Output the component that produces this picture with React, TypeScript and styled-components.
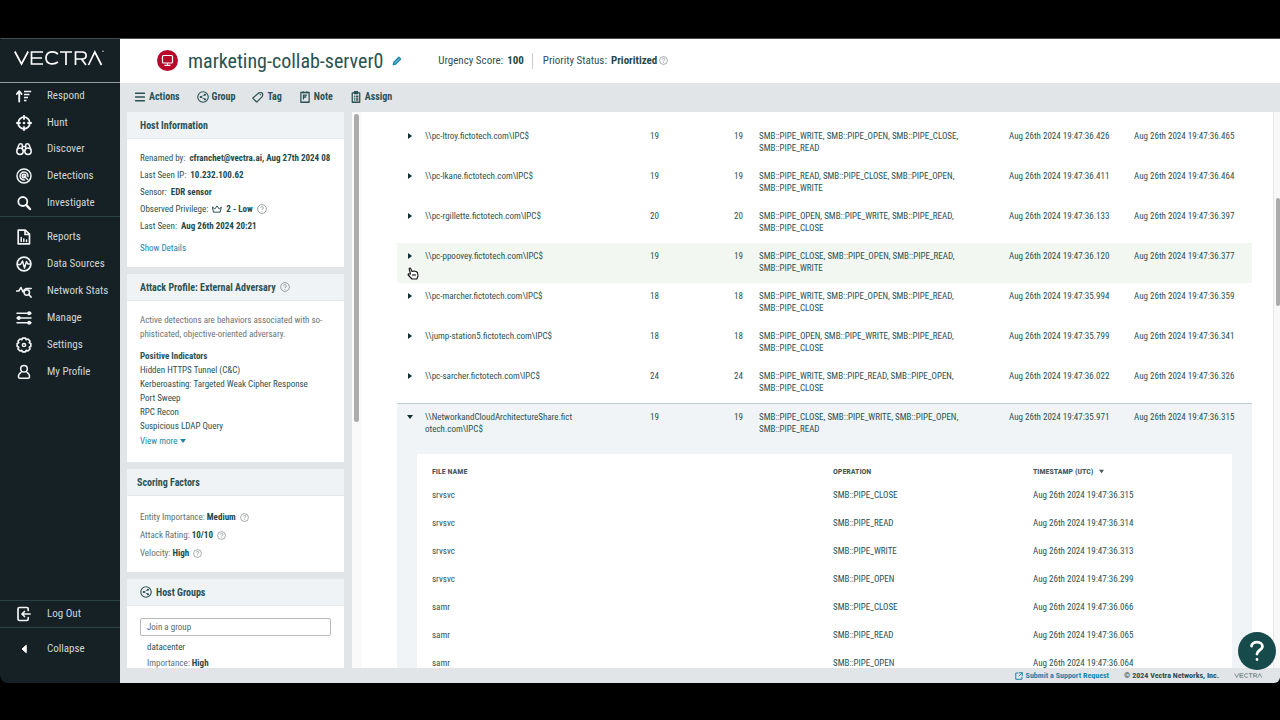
import React from "react";
import styled, { createGlobalStyle, css } from "styled-components";

const Global = createGlobalStyle`
  * { box-sizing: border-box; }
  html, body { margin: 0; background: #000; }
  body, button, input { font-family: "Roboto Condensed", Roboto, sans-serif; }
  svg { display: block; flex: none; }
`;

const INK = "#2b5253";
const STRONG = "#1f4a4a";
const LINK = "#1b86a8";

const Frame = styled.div`
  height: 100vh;
  padding: 38px 0 37px;
  display: flex;
`;
const Sidebar = styled.aside`
  flex: none;
  width: 120px;
  background: #162126;
  color: #cfd6d8;
  border-radius: 4px 0 0 8px;
  display: flex;
  flex-direction: column;
`;
const Brand = styled.div`
  height: 45px;
  padding: 11px 14px;
  border-top: 1px solid #414a4e;
  border-bottom: 1px solid #93a0a3;
`;
const Nav = styled.nav<{ $height: number }>`
  height: ${(p) => p.$height}px;
  display: grid;
  grid-auto-rows: 1fr;
  & + & {
    border-top: 1px solid #2d4246;
    padding-top: 7px;
  }
`;
const NavLink = styled.a`
  min-height: 26px;
  padding-left: 16px;
  display: flex;
  align-items: center;
  gap: 15px;
  color: inherit;
  text-decoration: none;
  font-size: 11px;
  line-height: 16px;
  svg { color: #f2f5f5; }
`;
const SideFoot = styled.div`
  margin-top: auto;
  border-top: 1px solid #2d4246;
`;
const Collapse = styled.button`
  width: 100%;
  height: 56px;
  padding: 0 0 14px 16px;
  border: 0;
  border-top: 1px solid #2d4246;
  background: none;
  color: inherit;
  display: flex;
  align-items: center;
  gap: 15px;
  font-size: 11px;
  line-height: 16px;
  text-align: left;
  svg { color: #fff; }
`;

const Main = styled.div`
  flex: 1;
  min-width: 0;
  background: #e1e5e8;
  border-top: 1px solid #4a4f50;
  display: flex;
  flex-direction: column;
  border-radius: 0 0 6px 0;
  overflow: hidden;
`;
const Header = styled.header`
  flex: none;
  height: 44px;
  padding: 0 0 1px 37px;
  background: #fff;
  display: flex;
  align-items: center;
  color: ${INK};
  font-size: 11px;
`;
const Title = styled.h1`
  margin: 0 9px 0 10px;
  font-size: 20px;
  line-height: 24px;
  font-weight: 400;
`;
const IconButton = styled.button`
  padding: 0;
  border: 0;
  background: none;
  color: ${LINK};
  display: flex;
`;
const Stat = styled.div`
  display: flex;
  align-items: center;
  gap: 4px;
  strong { color: ${STRONG}; }
  svg { margin-left: -2px; }
`;
const StatBar = styled.div`
  margin-left: 36px;
  display: flex;
  align-items: center;
  line-height: 16px;
  ${Stat} + ${Stat} {
    margin-left: 8px;
    padding-left: 10px;
    border-left: 1px solid #c9cfd1;
  }
`;
const Toolbar = styled.div`
  flex: none;
  height: 29px;
  padding: 0 0 1px 14px;
  display: flex;
  align-items: center;
  gap: 17px;
`;
const Tool = styled.button`
  padding: 0;
  border: 0;
  background: none;
  display: flex;
  align-items: center;
  gap: 3px;
  font-size: 10px;
  line-height: 14px;
  font-weight: 700;
  color: ${INK};
`;

const Body = styled.div`
  flex: 1;
  min-height: 0;
  display: flex;
`;
const Panels = styled.div`
  flex: none;
  width: 232px;
  padding: 0 8px 0 7px;
  display: flex;
  flex-direction: column;
  gap: 7px;
  overflow: hidden;
`;
const Panel = styled.section`
  flex: none;
  background: #fff;
  color: ${INK};
  font-size: 9px;
`;
const PanelHead = styled.h2<{ $tight?: boolean }>`
  margin: 0;
  height: 27px;
  padding: 0 0 0 ${(p) => (p.$tight ? 10 : 13)}px;
  background: #f0f3f5;
  border-bottom: 1px solid #e4e9eb;
  display: flex;
  align-items: center;
  gap: 4px;
  font-size: 10px;
  font-weight: 700;
`;
const PanelBody = styled.div<{ $top: number; $bottom: number }>`
  padding: ${(p) => p.$top}px 13px ${(p) => p.$bottom}px;
`;
const Facts = styled.dl<{ $row: number; $muted?: boolean }>`
  margin: 0;
  div {
    height: ${(p) => p.$row}px;
    display: flex;
    align-items: center;
    gap: ${(p) => (p.$muted ? 2 : 4)}px;
    white-space: nowrap;
    overflow: hidden;
  }
  dt { color: ${(p) => (p.$muted ? "#5e7072" : INK)}; }
  dd {
    margin: 0;
    color: ${STRONG};
    font-weight: 700;
    display: flex;
    align-items: center;
    gap: 4px;
  }
`;
const TextLink = styled.a`
  color: ${LINK};
  text-decoration: none;
  display: flex;
  align-items: center;
  gap: 3px;
  line-height: 14px;
`;
const Spaced = styled.div`
  padding-top: 7px;
`;
const Blurb = styled.p`
  margin: 0 0 8px;
  color: #6b7476;
  line-height: 14px;
`;
const SubHead = styled.h3`
  margin: 0;
  font-size: 9px;
  line-height: 14px;
`;
const List = styled.ul`
  margin: 0 0 1px;
  padding: 0;
  list-style: none;
  line-height: 14px;
`;
const JoinInput = styled.input`
  display: block;
  width: 100%;
  height: 18px;
  padding: 0 6px;
  border: 1px solid #b4babc;
  border-radius: 2px;
  font-size: 9px;
  &::placeholder { color: #5e6769; opacity: 1; }
`;
const GroupItem = styled.div`
  padding: 3px 7px;
  line-height: 16px;
  color: #5e7072;
  a { color: ${INK}; text-decoration: none; }
  strong { color: ${STRONG}; }
`;

const Track = styled.div<{ $edge?: boolean }>`
  flex: none;
  width: ${(p) => (p.$edge ? 7 : 9)}px;
  padding: ${(p) => (p.$edge ? "86px 0 0 2px" : "2px 2px 0")};
  background: ${(p) => (p.$edge ? "#f8f8f9" : "#fafafa")};
  border-left: ${(p) => (p.$edge ? "1px solid #e6e8e9" : "0")};
`;
const Thumb = styled.div<{ $h: number }>`
  height: ${(p) => p.$h}px;
  border-radius: 4px;
  background: #acacac;
`;
const Content = styled.main`
  flex: 1;
  min-width: 0;
  padding: 11px 21px 0 36px;
  background: #fff;
  overflow: hidden;
`;
const Shares = styled.table`
  width: 100%;
  border-spacing: 0;
  table-layout: fixed;
  color: ${INK};
  font-size: 9px;
  line-height: 12px;
  td { padding: 0; vertical-align: top; }
`;
const ShareRow = styled.tr<{ $hover?: boolean; $open?: boolean }>`
  height: ${(p) => (p.$open ? 41 : 40)}px;
  background: ${(p) => (p.$open ? "#f0f4f6" : p.$hover ? "#f3f7f1" : "#fff")};
  td {
    padding-top: 7px;
    ${(p) => p.$open && css`border-top: 1px solid #c3cbce;`}
  }
  td:nth-child(3), td:nth-child(4) { text-align: right; }
  td:nth-child(5) { padding-left: 16px; }
`;
const Toggle = styled.button`
  width: 26px;
  height: 12px;
  padding: 0;
  border: 0;
  background: none;
  color: #122e30;
  display: flex;
  align-items: center;
  justify-content: center;
`;
const Detail = styled.td`
  background: #f0f4f6;
  && { padding: 10px 20px 0; }
`;
const Files = styled.table`
  width: 100%;
  background: #fff;
  border-spacing: 0;
  table-layout: fixed;
  th, td { text-align: left; vertical-align: middle; padding: 0 0 0 15px; }
  && td { height: 28px; padding-left: 15px; vertical-align: middle; }
  th { height: 27px; padding-top: 8px; color: #46575a; font-size: 8px; font-weight: 700; }
`;
const SortButton = styled.button`
  padding: 0;
  border: 0;
  background: none;
  color: inherit;
  font-size: 8px;
  line-height: 12px;
  font-weight: 700;
  display: flex;
  align-items: center;
  gap: 6px;
`;
const Footer = styled.footer`
  flex: none;
  height: 15px;
  padding-right: 17px;
  display: flex;
  align-items: center;
  justify-content: flex-end;
  gap: 15px;
  font-size: 8px;
  font-weight: 700;
  color: #2f4b4d;
`;
const HelpButton = styled.button`
  position: fixed;
  right: 4px;
  bottom: 50px;
  width: 38px;
  height: 38px;
  padding: 0;
  border: 0;
  border-radius: 50%;
  background: #174a4b;
  color: #fff;
  display: flex;
  align-items: center;
  justify-content: center;
`;
const Pointer = styled.svg`
  position: absolute;
  left: 407px;
  top: 267px;
`;
const Col = styled.col<{ $w: string }>`
  width: ${(p) => p.$w};
`;

const VectraLogo = ({ width, color }: { width: number; color: string }) => (
  <svg width={width} height={Math.round(width * 0.18)} viewBox="0 0 90 16" fill="none" stroke={color} strokeWidth="1.7" role="img" aria-label="Vectra">
    <path d="M0.8 1.500 7.500 14 14.200 1.500M29 2H17.500V14H29M17.500 8H28M44 4C40 .8 32 1 32 8S40 15 44 12M46 2H58M52 2V15M61.500 15V2H68C73.500 2 73.500 9 68 9H61.500M67.500 9 72 15M74.500 15 80.800 2 87.500 15" />
    <circle cx="89" cy="1.200" r=".5" strokeWidth=".5" />
  </svg>
);

const Svg = ({ size = 16, sw = 1.5, children }: { size?: number; sw?: number; children: React.ReactNode }) => (
  <svg width={size} height={size} viewBox="0 0 16 16" fill="none" stroke="currentColor" strokeWidth={sw} strokeLinecap="round" strokeLinejoin="round" aria-hidden="true">
    {children}
  </svg>
);

const Help = ({ size = 10 }: { size?: number }) => (
  <svg width={size} height={size} viewBox="0 0 16 16" fill="none" stroke="#7c8587" strokeWidth="1.200" role="img" aria-label="Help">
    <circle cx="8" cy="8" r="7" />
    <path d="M5.800 6.300C5.800 3.400 10.300 3.500 10.200 6.200 10.100 7.800 8 7.900 8 9.700M8 11.300V12.500" />
  </svg>
);

const GroupIcon = ({ size = 12 }: { size?: number }) => (
  <Svg size={size}>
    <circle cx="8" cy="8" r="7" />
    <path d="M5 8 10.500 5M5 8 10.500 11" strokeWidth="1" strokeDasharray="1.500 1.500" />
    <circle cx="5" cy="8" r=".7" fill="currentColor" />
    <circle cx="10.500" cy="5" r=".7" fill="currentColor" />
    <circle cx="10.500" cy="11" r=".7" fill="currentColor" />
  </Svg>
);

const Caret = ({ dir, size = 6 }: { dir: "right" | "down"; size?: number }) => (
  <svg width={size} height={size} viewBox="0 0 6 6" fill="currentColor" aria-hidden="true">
    <path d={dir === "right" ? "M1 0 5 3 1 6Z" : "M0 1H6L3 5Z"} />
  </svg>
);

const icons: Record<string, React.ReactNode> = {
  Respond: (
    <>
      <path d="M3.200 13.500V3.500M.8 6 3.200 3.200 5.600 6" strokeWidth="1.900" />
      <path d="M8 3.500H15.200M8 6.500H13.500M8 9.500H12M8 12.500H10.500" strokeLinecap="butt" />
    </>
  ),
  Hunt: (
    <>
      <circle cx="8" cy="8" r="5.800" strokeWidth="1.800" />
      <path d="M8 .8V4M8 12V15.200M.8 8H4M12 8H15.200" strokeWidth="1.800" />
      <circle cx="8" cy="8" r=".5" fill="currentColor" />
    </>
  ),
  Discover: (
    <>
      <circle cx="4" cy="10.200" r="3.200" />
      <circle cx="12" cy="10.200" r="3.200" />
      <path d="M1.200 8.500 2.800 4C3.200 2.200 6.300 2.200 6.300 4V8M14.800 8.500 13.200 4C12.800 2.200 9.700 2.200 9.700 4V8M6.300 5.500H9.700M7.200 9.500H8.800" />
    </>
  ),
  Detections: (
    <>
      <circle cx="8" cy="8" r="7" />
      <path d="M8.500 12A4 4 0 1 1 12 8.500" />
      <path d="M8 9.800A1.800 1.800 0 1 1 9.800 8M8 8 11.800 11.800" />
    </>
  ),
  Investigate: (
    <>
      <circle cx="6.800" cy="6.500" r="4.500" strokeWidth="1.800" />
      <path d="M10.300 10.200 14 14" strokeWidth="2.500" />
    </>
  ),
  Reports: (
    <>
      <path d="M2.200 1.200H9.300L13.500 5.200V14.800H2.200ZM9 1.500V5.500H13.200" strokeWidth="1.700" />
      <path d="M5.200 12.500V8.500M7.800 12.500V10M10.500 12.500V11" />
    </>
  ),
  "Data Sources": (
    <>
      <circle cx="8" cy="8" r="6.900" strokeWidth="1.700" />
      <path d="M1.500 8.500H4.500L6.500 5 8.500 12 10.500 5.500 11.800 8H14.500" />
    </>
  ),
  "Network Stats": (
    <>
      <path d="M.5 8H2.800L5 4.500 7 9 8.500 6.500 10 5.500H15.200" />
      <circle cx="10.800" cy="9.500" r="2.700" />
      <path d="M12.800 11.500 15 14" strokeWidth="1.800" />
    </>
  ),
  Manage: (
    <>
      <path d="M1 3.200H15M1 8H15M1 12.800H15" />
      <circle cx="13.200" cy="3.200" r="1.200" fill="currentColor" />
      <circle cx="2.800" cy="8" r="1.200" fill="currentColor" />
      <circle cx="13.200" cy="12.800" r="1.200" fill="currentColor" />
    </>
  ),
  Settings: (
    <>
      <path d="M6.500 1.200H9.500L10.200 2.700 12 2 14 4 13.300 5.800 14.800 6.500V9.500L13.300 10.200 14 12 12 14 10.200 13.300 9.500 14.800H6.500L5.800 13.300 4 14 2 12 2.700 10.200 1.200 9.500V6.500L2.700 5.800 2 4 4 2 5.800 2.700Z" strokeWidth="1.700" />
      <circle cx="8" cy="8" r="1.600" />
    </>
  ),
  "My Profile": (
    <>
      <circle cx="8" cy="4.800" r="3.300" />
      <path d="M5 8.300C2.300 10 2.300 12 2.500 13.200 2.600 14 3 14.200 3.600 14.200H12.400C13 14.200 13.400 14 13.500 13.200 13.700 12 13.700 10 11 8.300" />
    </>
  ),
  "Log Out": (
    <path d="M12.200 4.500V3C12.200 2 11.500 1.500 10.800 1.500H3.500C2.500 1.500 2 2 2 3V13C2 14 2.500 14.500 3.500 14.500H10.800C11.500 14.500 12.200 14 12.200 13V11.500M14 8H6M8.500 5.500 6 8 8.500 10.500" strokeWidth="1.700" />
  ),
};

const primary = ["Respond", "Hunt", "Discover", "Detections", "Investigate"];
const secondary = ["Reports", "Data Sources", "Network Stats", "Manage", "Settings", "My Profile"];

const NavItem = ({ name }: { name: string }) => (
  <NavLink href="#">
    <Svg>{icons[name]}</Svg>
    {name}
  </NavLink>
);

const tools: [string, React.ReactNode][] = [
  ["Actions", <Svg size={12} sw={1.8}><path d="M2 3H14M2 8H14M2 13H14" /></Svg>],
  ["Group", <GroupIcon />],
  ["Tag", <Svg size={12} sw={1.7}><path d="M1.500 9 8.500 3C9.500 2.200 13 2 13.800 2.800 14.500 3.500 14.300 6.500 13.500 7.500L7 14.200C6.500 14.600 6 14.500 5.500 14L1.500 10.200C1.200 9.800 1.100 9.400 1.500 9ZM11.200 5V5.100" /></Svg>],
  ["Note", <Svg size={12} sw={1.7}><path d="M2.500 2H13.500V15H2.500ZM6 10.500V5.500H10M6 8H9M5.500 1V2.500M10.500 1V2.500" /></Svg>],
  ["Assign", <Svg size={12} sw={1.7}><path d="M3 2.500H13V15H3ZM6 1H10V3.500H6ZM6 7H6.200M8.500 7H10.500M6 9.500H6.200M8.500 9.500H10.500M6 12H6.200M8.500 12H10.500" /></Svg>],
];

const pipeOps = (names: string) => names.split(" ").map((n) => "SMB::PIPE_" + n).join(", ");
const DAY = "Aug 26th 2024 19:47:";
const shares = [
  { name: "\\\\pc-ltroy.fictotech.com\\IPC$", n: 19, ops: pipeOps("WRITE OPEN CLOSE READ"), first: "36.426", last: "36.465" },
  { name: "\\\\pc-lkane.fictotech.com\\IPC$", n: 19, ops: pipeOps("READ CLOSE OPEN WRITE"), first: "36.411", last: "36.464" },
  { name: "\\\\pc-rgillette.fictotech.com\\IPC$", n: 20, ops: pipeOps("OPEN WRITE READ CLOSE"), first: "36.133", last: "36.397" },
  { name: "\\\\pc-ppoovey.fictotech.com\\IPC$", n: 19, ops: pipeOps("CLOSE OPEN READ WRITE"), first: "36.120", last: "36.377", hover: true },
  { name: "\\\\pc-marcher.fictotech.com\\IPC$", n: 18, ops: pipeOps("WRITE OPEN READ CLOSE"), first: "35.994", last: "36.359" },
  { name: "\\\\jump-station5.fictotech.com\\IPC$", n: 18, ops: pipeOps("OPEN WRITE READ CLOSE"), first: "35.799", last: "36.341" },
  { name: "\\\\pc-sarcher.fictotech.com\\IPC$", n: 24, ops: pipeOps("WRITE READ OPEN CLOSE"), first: "36.022", last: "36.326" },
  { name: "\\\\NetworkandCloudArchitectureShare.fict\u200Botech.com\\IPC$", n: 19, ops: pipeOps("CLOSE WRITE OPEN READ"), first: "35.971", last: "36.315", open: true },
];
const files = [
  ["srvsvc", "CLOSE", "36.315"],
  ["srvsvc", "READ", "36.314"],
  ["srvsvc", "WRITE", "36.313"],
  ["srvsvc", "OPEN", "36.299"],
  ["samr", "CLOSE", "36.066"],
  ["samr", "READ", "36.065"],
  ["samr", "OPEN", "36.064"],
];

export default function App() {
  return (
    <>
      <Global />
      <Frame>
        <Sidebar>
          <Brand><VectraLogo width={90} color="#fff" /></Brand>
          <Nav $height={133}>{primary.map((n) => <NavItem key={n} name={n} />)}</Nav>
          <Nav $height={169}>{secondary.map((n) => <NavItem key={n} name={n} />)}</Nav>
          <SideFoot>
            <NavItem name="Log Out" />
            <Collapse>
              <Svg><path d="M10 4.500 6 8 10 11.500Z" fill="currentColor" strokeWidth="1" /></Svg>
              Collapse
            </Collapse>
          </SideFoot>
        </Sidebar>
        <Main>
          <Header>
            <svg width="21" height="21" viewBox="0 0 21 21" fill="none" stroke="#fff" strokeWidth="1.200" aria-hidden="true">
              <circle cx="10.500" cy="10.500" r="10.500" fill="#b8082c" stroke="none" />
              <rect x="5.500" y="5.500" width="10" height="7.500" rx="1" />
              <path d="M10.500 13V15M7.500 15.300H13.500" />
            </svg>
            <Title>marketing-collab-server0</Title>
            <IconButton aria-label="Rename host">
              <Svg size={10} sw={2}><path d="M2 14 3 10 11 2 14 5 6 13Z" fill="#5fb4cc" /></Svg>
            </IconButton>
            <StatBar>
              <Stat>Urgency Score: <strong>100</strong></Stat>
              <Stat>Priority Status: <strong>Prioritized</strong> <Help size={9} /></Stat>
            </StatBar>
          </Header>
          <Toolbar>
            {tools.map(([n, i]) => <Tool key={n}>{i}{n}</Tool>)}
          </Toolbar>
          <Body>
            <Panels>
              <Panel>
                <PanelHead>Host Information</PanelHead>
                <PanelBody $top={10} $bottom={12}>
                  <Facts $row={17}>
                    <div><dt>Renamed by:</dt><dd>cfranchet@vectra.ai, Aug 27th 2024 08</dd></div>
                    <div><dt>Last Seen IP:</dt><dd>10.232.100.62</dd></div>
                    <div><dt>Sensor:</dt><dd>EDR sensor</dd></div>
                    <div>
                      <dt>Observed Privilege:</dt>
                      <dd>
                        <Svg size={10}><path d="M1 5 4.500 8 8 3 11.500 8 15 5 13 13H3Z" /></Svg>
                        2 - Low <Help />
                      </dd>
                    </div>
                    <div><dt>Last Seen:</dt><dd>Aug 26th 2024 20:21</dd></div>
                  </Facts>
                  <Spaced><TextLink href="#">Show Details</TextLink></Spaced>
                </PanelBody>
              </Panel>
              <Panel>
                <PanelHead>Attack Profile: External Adversary <Help /></PanelHead>
                <PanelBody $top={12} $bottom={14}>
                  <Blurb>Active detections are behaviors associated with so-<br />phisticated, objective-oriented adversary.</Blurb>
                  <SubHead>Positive Indicators</SubHead>
                  <List>
                    <li>Hidden HTTPS Tunnel (C&amp;C)</li>
                    <li>Kerberoasting: Targeted Weak Cipher Response</li>
                    <li>Port Sweep</li>
                    <li>RPC Recon</li>
                    <li>Suspicious LDAP Query</li>
                  </List>
                  <TextLink href="#">View more <Caret dir="down" /></TextLink>
                </PanelBody>
              </Panel>
              <Panel>
                <PanelHead $tight>Scoring Factors</PanelHead>
                <PanelBody $top={12} $bottom={10}>
                  <Facts $row={18} $muted>
                    <div><dt>Entity Importance:</dt><dd>Medium <Help size={9} /></dd></div>
                    <div><dt>Attack Rating:</dt><dd>10/10 <Help size={9} /></dd></div>
                    <div><dt>Velocity:</dt><dd>High <Help size={9} /></dd></div>
                  </Facts>
                </PanelBody>
              </Panel>
              <Panel>
                <PanelHead><GroupIcon /> Host Groups</PanelHead>
                <PanelBody $top={12} $bottom={12}>
                  <JoinInput placeholder="Join a group" aria-label="Join a group" />
                  <GroupItem>
                    <a href="#">datacenter</a>
                    <div>Importance: <strong>High</strong></div>
                  </GroupItem>
                </PanelBody>
              </Panel>
            </Panels>
            <Track><Thumb $h={308} /></Track>
            <Content>
              <Shares>
                <colgroup>
                  <Col $w="28px" />
                  <Col $w="154px" />
                  <Col $w="80px" />
                  <Col $w="84px" />
                  <Col $w="auto" />
                  <Col $w="125px" />
                  <Col $w="118px" />
                </colgroup>
                <tbody>
                  {shares.map((s) => (
                    <ShareRow key={s.name} $hover={s.hover} $open={s.open}>
                      <td><Toggle aria-label="Toggle details" aria-expanded={!!s.open}><Caret dir={s.open ? "down" : "right"} /></Toggle></td>
                      <td>{s.name}</td>
                      <td>{s.n}</td>
                      <td>{s.n}</td>
                      <td>{s.ops}</td>
                      <td>{DAY + s.first}</td>
                      <td>{DAY + s.last}</td>
                    </ShareRow>
                  ))}
                  <tr>
                    <Detail colSpan={7}>
                      <Files>
                        <colgroup>
                          <Col $w="auto" />
                          <Col $w="200px" />
                          <Col $w="214px" />
                        </colgroup>
                        <thead>
                          <tr>
                            <th>FILE NAME</th>
                            <th>OPERATION</th>
                            <th><SortButton>TIMESTAMP (UTC) <Caret dir="down" size={5} /></SortButton></th>
                          </tr>
                        </thead>
                        <tbody>
                          {files.map(([f, op, t]) => (
                            <tr key={t}><td>{f}</td><td>{"SMB::PIPE_" + op}</td><td>{DAY + t}</td></tr>
                          ))}
                        </tbody>
                      </Files>
                    </Detail>
                  </tr>
                </tbody>
              </Shares>
            </Content>
            <Track $edge><Thumb $h={108} /></Track>
          </Body>
          <Footer>
            <TextLink href="#">
              <Svg size={8} sw={2}><path d="M6 2H1.500V14.500H14V10M9 1.500H14.500V7M14.500 1.500 8 8" /></Svg>
              Submit a Support Request
            </TextLink>
            <span>© 2024 Vectra Networks, Inc.</span>
            <VectraLogo width={29} color="#2f4b4d" />
          </Footer>
        </Main>
      </Frame>
      <HelpButton aria-label="Help">
        <svg width="16" height="22" viewBox="0 0 16 22" fill="none" stroke="#fff" strokeWidth="2.800" strokeLinecap="round" aria-hidden="true">
          <path d="M2.500 6C3 .8 13.500 .8 13.500 6.500 13.500 10 8 10 8 14M8 19.500V19.600" />
        </svg>
      </HelpButton>
      <Pointer width="12" height="13" viewBox="0 0 12 13" fill="#fff" stroke="#111" strokeWidth="1.100" strokeLinejoin="round" aria-hidden="true">
        <path d="M3.500 7 2.200 2C2 .8 3.400 .6 3.800 1.600L5 4.500 7 4 9 4.500 10.500 5.500 11 9 9.800 12H5L1.200 8C.8 6.800 2.200 6.300 3.500 7.500M6 7V9M8 7V9" />
      </Pointer>
    </>
  );
}
